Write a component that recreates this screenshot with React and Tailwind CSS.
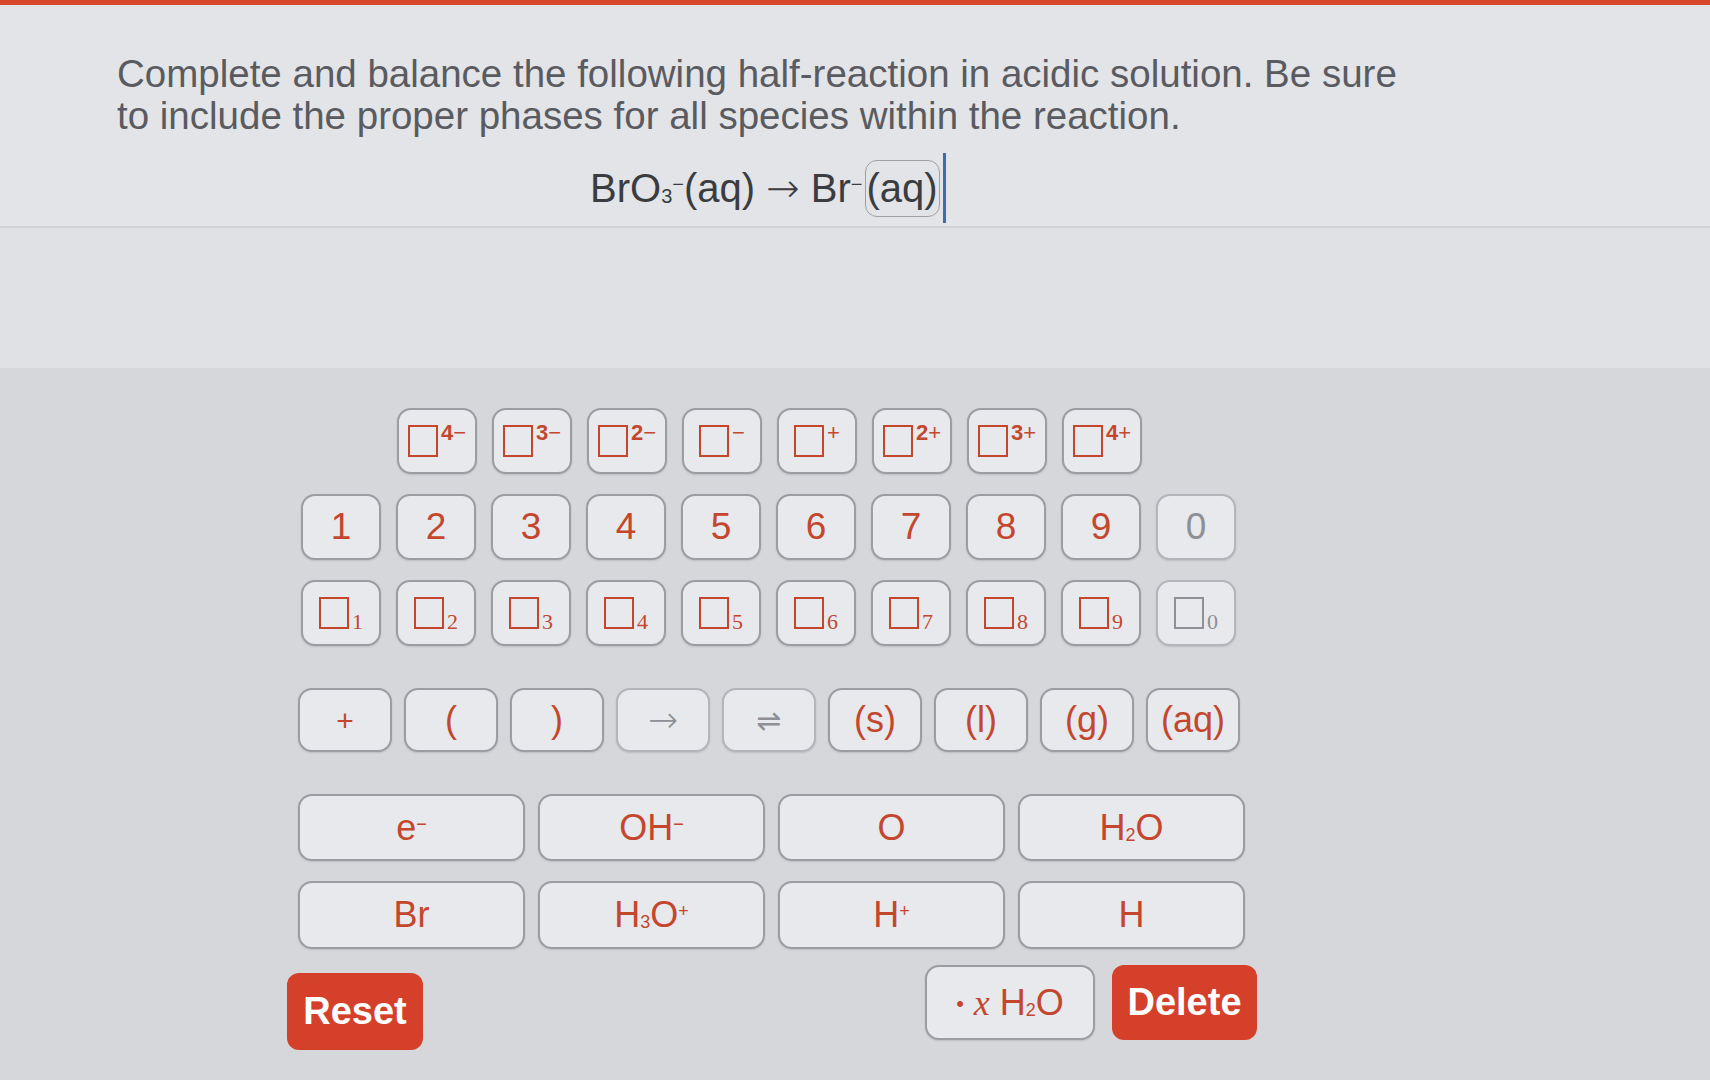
import React from 'react';

const sans = "font-['Liberation_Sans',Arial,sans-serif]";
const serif = "font-['Liberation_Serif','Times_New_Roman',serif]";
const dejavu = "font-['DejaVu_Sans',sans-serif]";

const Key = ({ className = '', disabled = false, children }) => (
  <div
    className={`flex shrink-0 items-center justify-center rounded-[14px] border-2 bg-[#e7e9ed] shadow-[0_1px_2px_rgba(0,0,0,0.12)] ${
      disabled ? 'border-[#b3b5ba] text-[#8e9095]' : 'border-[#9b9da2] text-[#c4472d]'
    } ${className}`}
  >
    {children}
  </div>
);

const Box = () => <span className="inline-block h-[32px] w-[30px] border-2 border-current" />;

const ChargeKey = ({ num, sign }) => (
  <Key className="h-[66px] w-[80px]">
    <div className="flex items-start">
      <Box />
      <span className="ml-[3px] mt-[-3px] text-[22px] leading-none">
        {num && <span className="font-bold">{num}</span>}
        <span className="font-light">{sign}</span>
      </span>
    </div>
  </Key>
);

const SubKey = ({ n, disabled }) => (
  <Key className="h-[66px] w-[80px]" disabled={disabled}>
    <div className="flex items-end">
      <Box />
      <span className={`${serif} ml-[3px] mb-[-4px] text-[22px] leading-none`}>{n}</span>
    </div>
  </Key>
);

const Sup = ({ children }) => (
  <span className="align-[0.55em] text-[0.5em] leading-none">{children}</span>
);
const Sub = ({ children }) => (
  <span className="align-[-0.05em] text-[0.5em] leading-none">{children}</span>
);

export default function App() {
  const charges = [
    ['4', '−'],
    ['3', '−'],
    ['2', '−'],
    ['', '−'],
    ['', '+'],
    ['2', '+'],
    ['3', '+'],
    ['4', '+'],
  ];
  const digits = ['1', '2', '3', '4', '5', '6', '7', '8', '9'];

  return (
    <div className={`${sans} min-h-[1080px] w-full bg-[#d5d7da]`}>
      <div className="h-[5px] bg-[#d9472b]" />

      {/* Question */}
      <div className="h-[223px] border-b-2 border-[#cfd1d5] bg-[#e2e4e8]">
        <div className="pl-[117px] pt-[48px] text-[38.5px] leading-[42px] text-[#5a5b60]">
          Complete and balance the following half-reaction in acidic solution. Be sure
          <br />
          to include the proper phases for all species within the reaction.
        </div>
        <div className="mt-[15px] flex h-[72px] items-center pl-[590px]">
          <span className="text-[40px] leading-[64px] text-[#3b3c40]">
            BrO<Sub>3</Sub>
            <Sup>−</Sup>(aq) <span className={`${dejavu} text-[40px] font-light`}>→</span> Br<Sup>−</Sup>
            <span className="ml-[2px] inline-block rounded-[12px] border border-[#9ea0a4] px-[1px] leading-[55px]">
              (aq)
            </span>
          </span>
          <span className="ml-[3px] h-[70px] w-[3px] bg-[#3d6cb5]" />
        </div>
      </div>
      <div className="h-[140px] bg-[#dfe1e5]" />

      {/* Keypad */}
      <div className="flex flex-col pl-[287px] pt-[40px]">
        <div className="flex gap-[15px] pl-[110px]">
          {charges.map(([n, s], i) => (
            <ChargeKey key={i} num={n} sign={s} />
          ))}
        </div>

        <div className="mt-[20px] flex gap-[15px] pl-[14px]">
          {digits.map((d) => (
            <Key key={d} className="h-[66px] w-[80px] text-[37px]">
              {d}
            </Key>
          ))}
          <Key className="h-[66px] w-[80px] text-[37px]" disabled>
            0
          </Key>
        </div>

        <div className="mt-[20px] flex gap-[15px] pl-[14px]">
          {digits.map((d) => (
            <SubKey key={d} n={d} />
          ))}
          <SubKey n="0" disabled />
        </div>

        <div className="mt-[42px] flex gap-[12px] pl-[11px]">
          <Key className="h-[64px] w-[94px] text-[30px]">+</Key>
          <Key className="h-[64px] w-[94px] text-[36px]">(</Key>
          <Key className="h-[64px] w-[94px] text-[36px]">)</Key>
          <Key className={`h-[64px] w-[94px] text-[36px] ${dejavu} font-light`} disabled>
            →
          </Key>
          <Key className={`h-[64px] w-[94px] text-[30px] ${dejavu}`} disabled>
            ⇌
          </Key>
          <Key className="h-[64px] w-[94px] text-[36px]">(s)</Key>
          <Key className="h-[64px] w-[94px] text-[36px]">(l)</Key>
          <Key className="h-[64px] w-[94px] text-[36px]">(g)</Key>
          <Key className="h-[64px] w-[94px] text-[36px]">(aq)</Key>
        </div>

        <div className="mt-[42px] flex gap-[13px] pl-[11px]">
          <Key className="h-[67px] w-[227px] text-[36px]">
            <span>
              e<Sup>−</Sup>
            </span>
          </Key>
          <Key className="h-[67px] w-[227px] text-[36px]">
            <span>
              OH<Sup>−</Sup>
            </span>
          </Key>
          <Key className="h-[67px] w-[227px] text-[36px]">O</Key>
          <Key className="h-[67px] w-[227px] text-[36px]">
            <span>
              H<Sub>2</Sub>O
            </span>
          </Key>
        </div>

        <div className="mt-[20px] flex gap-[13px] pl-[11px]">
          <Key className="h-[68px] w-[227px] text-[36px]">Br</Key>
          <Key className="h-[68px] w-[227px] text-[36px]">
            <span>
              H<Sub>3</Sub>O<Sup>+</Sup>
            </span>
          </Key>
          <Key className="h-[68px] w-[227px] text-[36px]">
            <span>
              H<Sup>+</Sup>
            </span>
          </Key>
          <Key className="h-[68px] w-[227px] text-[36px]">H</Key>
        </div>

        <div className="mt-[16px] flex w-[970px] items-start">
          <button className="mt-[8px] flex h-[77px] w-[136px] items-center justify-center rounded-[12px] bg-[#d5402a] text-[38px] font-bold text-white">
            Reset
          </button>
          <Key className="ml-auto h-[75px] w-[170px] text-[36px]">
            <span>
              <span className="mr-[10px] align-[0.15em] text-[22px]">•</span>
              <span className={`${serif} italic`}>x</span> H<Sub>2</Sub>O
            </span>
          </Key>
          <button className="ml-[17px] flex h-[75px] w-[145px] items-center justify-center rounded-[12px] bg-[#d5402a] text-[38px] font-bold text-white">
            Delete
          </button>
        </div>
      </div>
    </div>
  );
}
